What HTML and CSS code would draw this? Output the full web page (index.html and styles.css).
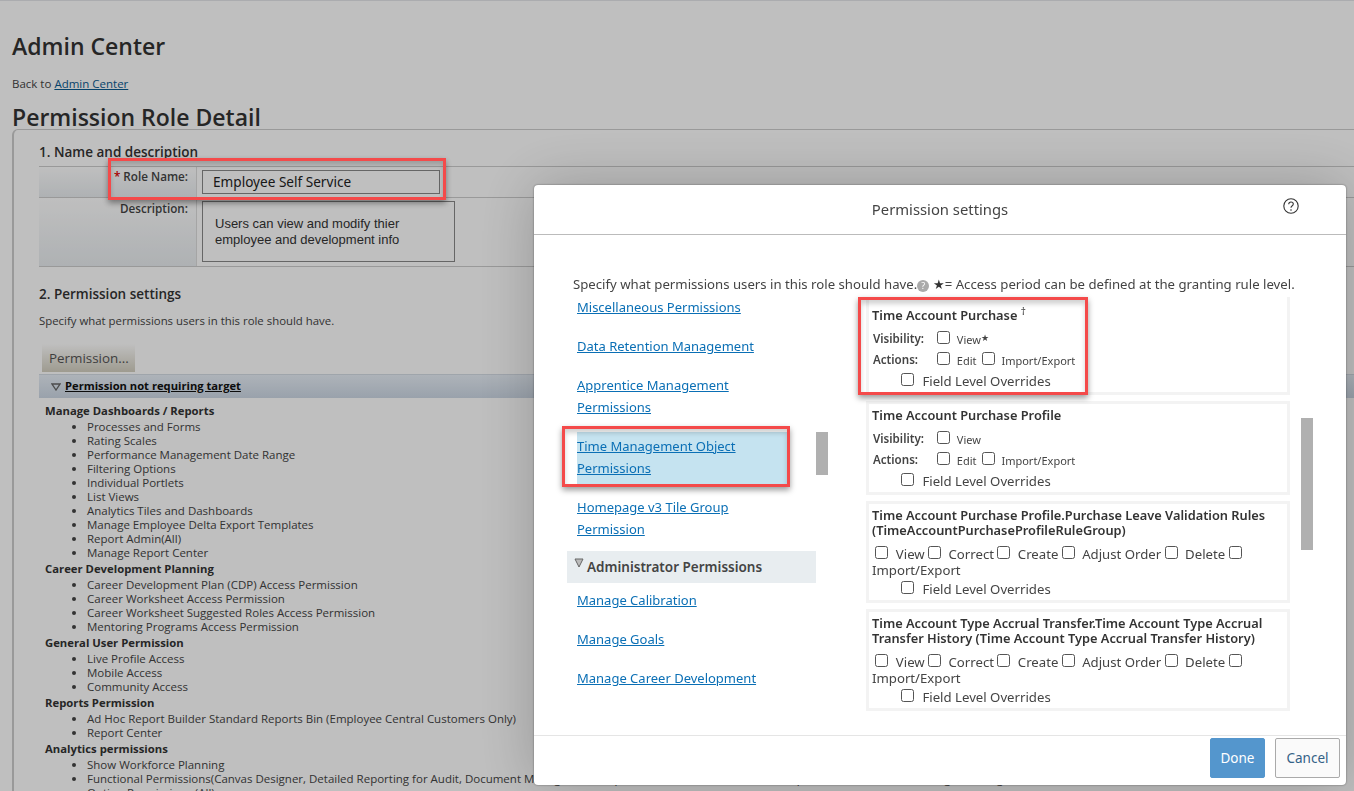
FILE: index.html
```html
<!DOCTYPE html>
<html lang="en">
<head>
<meta charset="utf-8">
<title>Permission Role Detail</title>
<link rel="stylesheet" href="styles.css">
</head>
<body>
<div class="page">
  <h1 class="title">Admin Center</h1>
  <p class="back">Back to <a href="#">Admin Center</a></p>
  <h2 class="subtitle">Permission Role Detail</h2>
  <div class="panel">
    <h3 class="sec sec-one">1. Name and description</h3>
    <div class="form">
      <div class="row row-name">
        <div class="lab"><span class="req">*</span> Role Name:</div>
        <div class="val"><div class="input">Employee Self Service</div></div>
      </div>
      <div class="row row-desc">
        <div class="lab">Description:</div>
        <div class="val"><div class="area">Users can view and modify thier<br>employee and development info</div></div>
      </div>
    </div>
    <h3 class="sec sec-two">2. Permission settings</h3>
    <p class="hint">Specify what permissions users in this role should have.</p>
    <button class="perm-btn">Permission...</button>
    <div class="bar">
      <svg class="tri" width="10" height="8" viewBox="0 0 10 8"><path d="M1 1h8L5 7z" fill="none" stroke="#666" stroke-width="1.3"/></svg>
      <a href="#">Permission not requiring target</a>
    </div>
    <div class="perms">
      <h4>Manage Dashboards / Reports</h4>
      <ul>
        <li>Processes and Forms</li><li>Rating Scales</li><li>Performance Management Date Range</li><li>Filtering Options</li><li>Individual Portlets</li><li>List Views</li><li>Analytics Tiles and Dashboards</li><li>Manage Employee Delta Export Templates</li><li>Report Admin(All)</li><li>Manage Report Center</li>
      </ul>
      <h4>Career Development Planning</h4>
      <ul>
        <li>Career Development Plan (CDP) Access Permission</li><li>Career Worksheet Access Permission</li><li>Career Worksheet Suggested Roles Access Permission</li><li>Mentoring Programs Access Permission</li>
      </ul>
      <h4>General User Permission</h4>
      <ul>
        <li>Live Profile Access</li><li>Mobile Access</li><li>Community Access</li>
      </ul>
      <h4>Reports Permission</h4>
      <ul>
        <li>Ad Hoc Report Builder Standard Reports Bin (Employee Central Customers Only)</li><li>Report Center</li>
      </ul>
      <h4>Analytics permissions</h4>
      <ul>
        <li>Show Workforce Planning</li><li>Functional Permissions(Canvas Designer, Detailed Reporting for Audit, Document Management, Report Center, Dashboards, Tiles, Report Distribution, Scheduling, Planning)</li><li>Option Permissions (All)</li>
      </ul>
    </div>
  </div>
</div>
<div class="dim"></div>
<div class="dialog">
  <header class="dlg-head">
    <span>Permission settings</span>
    <svg class="help" width="16" height="16" viewBox="0 0 16 16"><circle cx="8" cy="8" r="7.2" fill="none" stroke="#333" stroke-width="1.1"/><path d="M5.7 6.2C5.8 4.7 6.8 4 8 4c1.3 0 2.3.8 2.3 2 0 1-.6 1.5-1.3 2-.7.5-1 .9-1 1.8" fill="none" stroke="#333" stroke-width="1.1"/><circle cx="8" cy="12" r=".8" fill="#333"/></svg>
  </header>
  <p class="intro">Specify what permissions users in this role should have.<span class="info">?</span> <span class="star">★</span>= Access period can be defined at the granting rule level.</p>
  <div class="cols">
    <div class="nav">
      <div class="nav-inner">
        <a class="item" href="#">Miscellaneous Permissions</a>
        <a class="item" href="#">Data Retention Management</a>
        <a class="item" href="#">Apprentice Management Permissions</a>
        <a class="item active" href="#">Time Management Object Permissions</a>
        <a class="item last" href="#">Homepage v3 Tile Group Permission</a>
        <div class="group">
          <svg class="tri-group" width="10" height="10" viewBox="0 0 10 10"><path d="M1 1h8L5 9z" fill="#bbb" stroke="#666" stroke-width="1"/></svg>
          Administrator Permissions
        </div>
        <a class="item" href="#">Manage Calibration</a>
        <a class="item" href="#">Manage Goals</a>
        <a class="item" href="#">Manage Career Development</a>
      </div>
    </div>
    <div class="track track-left"><div class="thumb thumb-left"></div></div>
    <div class="cards">
      <section class="card card-clipped">
        <h5>Time Account Purchase <sup>†</sup></h5>
        <div class="line"><b>Visibility:</b><label><input type="checkbox"> View<span class="mini-star">★</span></label></div>
        <div class="line"><b>Actions:</b><label><input type="checkbox"> Edit</label><label><input type="checkbox"> Import/Export</label></div>
        <div class="fld"><label><input type="checkbox"> Field Level Overrides</label></div>
      </section>
      <section class="card">
        <h5>Time Account Purchase Profile</h5>
        <div class="line"><b>Visibility:</b><label><input type="checkbox"> View</label></div>
        <div class="line"><b>Actions:</b><label><input type="checkbox"> Edit</label><label><input type="checkbox"> Import/Export</label></div>
        <div class="fld"><label><input type="checkbox"> Field Level Overrides</label></div>
      </section>
      <section class="card">
        <h5>Time Account Purchase Profile.Purchase Leave Validation Rules (TimeAccountPurchaseProfileRuleGroup)</h5>
        <div class="flow"><input type="checkbox"> View<input type="checkbox"> Correct<input type="checkbox"> Create<input type="checkbox"> Adjust Order<input type="checkbox"> Delete<input type="checkbox"> Import/Export</div>
        <div class="fld"><label><input type="checkbox"> Field Level Overrides</label></div>
      </section>
      <section class="card">
        <h5>Time Account Type Accrual Transfer.Time Account Type Accrual Transfer History (Time Account Type Accrual Transfer History)</h5>
        <div class="flow"><input type="checkbox"> View<input type="checkbox"> Correct<input type="checkbox"> Create<input type="checkbox"> Adjust Order<input type="checkbox"> Delete<input type="checkbox"> Import/Export</div>
        <div class="fld"><label><input type="checkbox"> Field Level Overrides</label></div>
      </section>
    </div>
    <div class="track track-right"><div class="thumb thumb-right"></div></div>
  </div>
  <footer class="dlg-foot">
    <button class="done">Done</button>
    <button class="cancel">Cancel</button>
  </footer>
</div>
<div class="mark mark-role"></div>
<div class="mark mark-card"></div>
<div class="mark mark-nav"></div>
</body>
</html>
```
FILE: styles.css
```css
* { box-sizing: border-box; }
html, body { margin: 0; height: 791px; overflow: hidden; background: #fff; }
body { font-family: "Open Sans", sans-serif; font-size: 11.5px; color: #333; }

.page { height: 791px; padding: 31px 0 0 12px; border-top: 1px solid #e4e6ea; overflow: hidden; }
.title { margin: 0; font-size: 23px; line-height: 28px; font-weight: 600; color: #333; }
.back { margin: 16px 0 0; line-height: 16px; font-size: 11.5px; color: #444; }
.back a { color: #0a5a8f; }
.subtitle { margin: 11px 0 0; height: 26px; font-size: 23px; line-height: 28px; font-weight: 600; color: #333; white-space: nowrap; }

.panel { height: 680px; padding: 14px 0 0 25px; border-left: 2px solid #ccc; border-top: 1px solid #ccc; border-top-left-radius: 6px; width: 1342px; }
.sec { margin: 0; font-size: 13.5px; line-height: 18px; font-weight: 600; color: #333; white-space: nowrap; }
.sec-one { height: 23px; margin-top: -1px; }
.form { border-top: 1px solid #ccc; }
.row { display: flex; border-bottom: 1px solid #ccc; }
.row-name { height: 31px; }
.row-desc { height: 69px; }
.lab { flex: none; width: 158px; padding: 2px 8px 0 0; text-align: right; font-weight: 600; font-size: 11.7px; line-height: 16px; color: #444; border-right: 1px solid #ddd; background: linear-gradient(#fff, #e9edf0); }
.row-name .lab { padding-top: 1px; }
.req { color: #d00; }
.val { padding: 3px 5px; }
.input { width: 238px; height: 24px; border: 1px solid #888; padding: 0 10px; font-family: "Noto Sans", sans-serif; font-size: 13.6px; line-height: 22px; color: #222; }
.area { width: 253px; height: 61px; border: 1px solid #888; padding: 14px 12px 0; font-family: "Liberation Sans", sans-serif; font-size: 13px; line-height: 15.5px; color: #333; }
.sec-two { margin-top: 18px; }
.hint { margin: 10px 0 0; font-size: 11.4px; line-height: 16px; color: #444; }
.perm-btn { display: block; width: 93px; height: 28px; margin: 15px 0 0 3px; padding: 0 0 0 7px; border: 0; background: linear-gradient(#fff, #d3cfc0); font: 13.4px/26px "Open Sans", sans-serif; color: #555; text-align: left; }
.bar { display: flex; align-items: center; height: 24px; margin-top: 2px; padding: 0 0 2px 12px; background: linear-gradient(#e8eff7, #cdd8e5); border-top: 1px solid #d5dce5; }
.bar a { margin-left: 4px; font-size: 11.2px; font-weight: 700; color: #111; }
.tri { margin-top: 2px; }
.perms { padding: 6px 0 0 6px; white-space: nowrap; }
.perms h4 { margin: 0; font-size: 11.3px; line-height: 14px; font-weight: 700; color: #333; height: 16px; }
.perms ul + h4 { margin-top: 2px; }
.perms ul { margin: 0; padding: 0 0 0 42px; }
.perms li { line-height: 14px; color: #444; }

.dim { position: fixed; inset: 0; background: rgba(0, 0, 0, .25); }

.dialog { position: fixed; left: 534px; top: 185px; width: 812px; height: 600px; display: flex; flex-direction: column; background: #fff; border-radius: 4px; box-shadow: 0 0 60px rgba(0, 0, 0, .22), 0 0 2px rgba(0, 0, 0, .5); font-family: "Noto Sans", sans-serif; color: #333; }
.dlg-head { flex: none; position: relative; height: 50px; padding-bottom: 2px; display: flex; align-items: center; justify-content: center; border-bottom: 1px solid #bbb; font-size: 14.8px; color: #444; }
.help { position: absolute; top: 13px; right: 47px; }
.intro { flex: none; margin: 38px 0 0 39px; height: 20px; font-size: 13.2px; line-height: 22px; color: #444; white-space: nowrap; }
.info { display: inline-block; width: 12px; height: 12px; border-radius: 50%; background: #aaa; color: #fff; font-size: 9px; line-height: 12px; text-align: center; vertical-align: 0; }
.star { color: #333; }
.cols { flex: none; display: flex; height: 414px; margin: 4px 0 0 33px; }
.nav { flex: none; width: 249px; overflow: hidden; }
.nav-inner { margin-top: -1px; }
.item { display: block; max-width: 195px; margin: 0 0 17px 10px; font-size: 13px; line-height: 22px; color: #0a6fb5; }
.item.active { width: 212px; max-width: none; margin-top: -3px; margin-bottom: 12px; padding: 3px 17px 5px 0; background: #c5e3f0; }
.item.last { margin-bottom: 11px; }
.group { position: relative; height: 32px; margin-bottom: 6px; padding: 7px 0 0 20px; background: #e8edf0; font-size: 13.5px; line-height: 18px; font-weight: 600; color: #444; }
.tri-group { position: absolute; left: 7px; top: 7px; }
.track { flex: none; width: 12px; }
.track-left { margin-right: 38px; }
.track-right { margin-left: 11px; }
.thumb { width: 12px; background: #b0b0b0; }
.thumb-left { height: 43px; margin-top: 135px; }
.thumb-right { height: 132px; margin-top: 121px; }
.cards { flex: none; width: 424px; overflow: hidden; }
.card { margin-bottom: 6px; padding: 4px 3px 1px; border: 3px solid #f3f3f3; }
.card-clipped { height: 98px; border-top: 0; padding-top: 11px; }
.card h5 { margin: 0 0 5px; font-size: 12.8px; line-height: 15px; font-weight: 600; color: #333; }
.card sup { font-size: 10px; font-weight: 400; line-height: 0; }
.line { display: flex; align-items: center; height: 21px; font-size: 11px; color: #444; padding-left: 1px; }
.line b { width: 64px; font-weight: 600; font-size: 11.6px; }
.line label { margin-right: 5px; }
.card input { appearance: none; -webkit-appearance: none; display: inline-block; width: 13px; height: 13px; margin: 0 4px 0 0; border: 1px solid #555; border-radius: 2.5px; background: #fff; vertical-align: 0; }
.mini-star { font-size: 9px; vertical-align: 3px; }
.fld { margin-top: 1px; padding-left: 29px; font-size: 13.2px; line-height: 20px; color: #444; }
.fld input { margin-right: 5px; }
.flow { padding-top: 3px; font-size: 13.2px; line-height: 16px; color: #444; }
.flow input { margin-left: 3.4px; }
.dlg-foot { flex: none; display: flex; justify-content: flex-end; gap: 10px; margin-top: 24px; padding: 2px 6px 0 0; height: 49px; border-top: 1px solid #e5e5e5; }
.done, .cancel { height: 40px; font: 13.5px "Noto Sans", sans-serif; border-radius: 2px; }
.done { width: 55px; border: 1px solid #5496cd; background: #5496cd; color: #fff; }
.cancel { width: 65px; border: 1px solid #aaa; background: #fafafa; color: #346187; }

.mark { position: fixed; border: 3px solid #f44a4a; box-shadow: 0 3px 6px rgba(0, 0, 0, .4), inset 0 4px 5px rgba(0, 0, 0, .18); }
.mark-role { left: 108px; top: 158px; width: 338px; height: 42px; }
.mark-card { left: 858px; top: 297px; width: 230px; height: 98px; }
.mark-nav { left: 562px; top: 426px; width: 228px; height: 61px; }
```
